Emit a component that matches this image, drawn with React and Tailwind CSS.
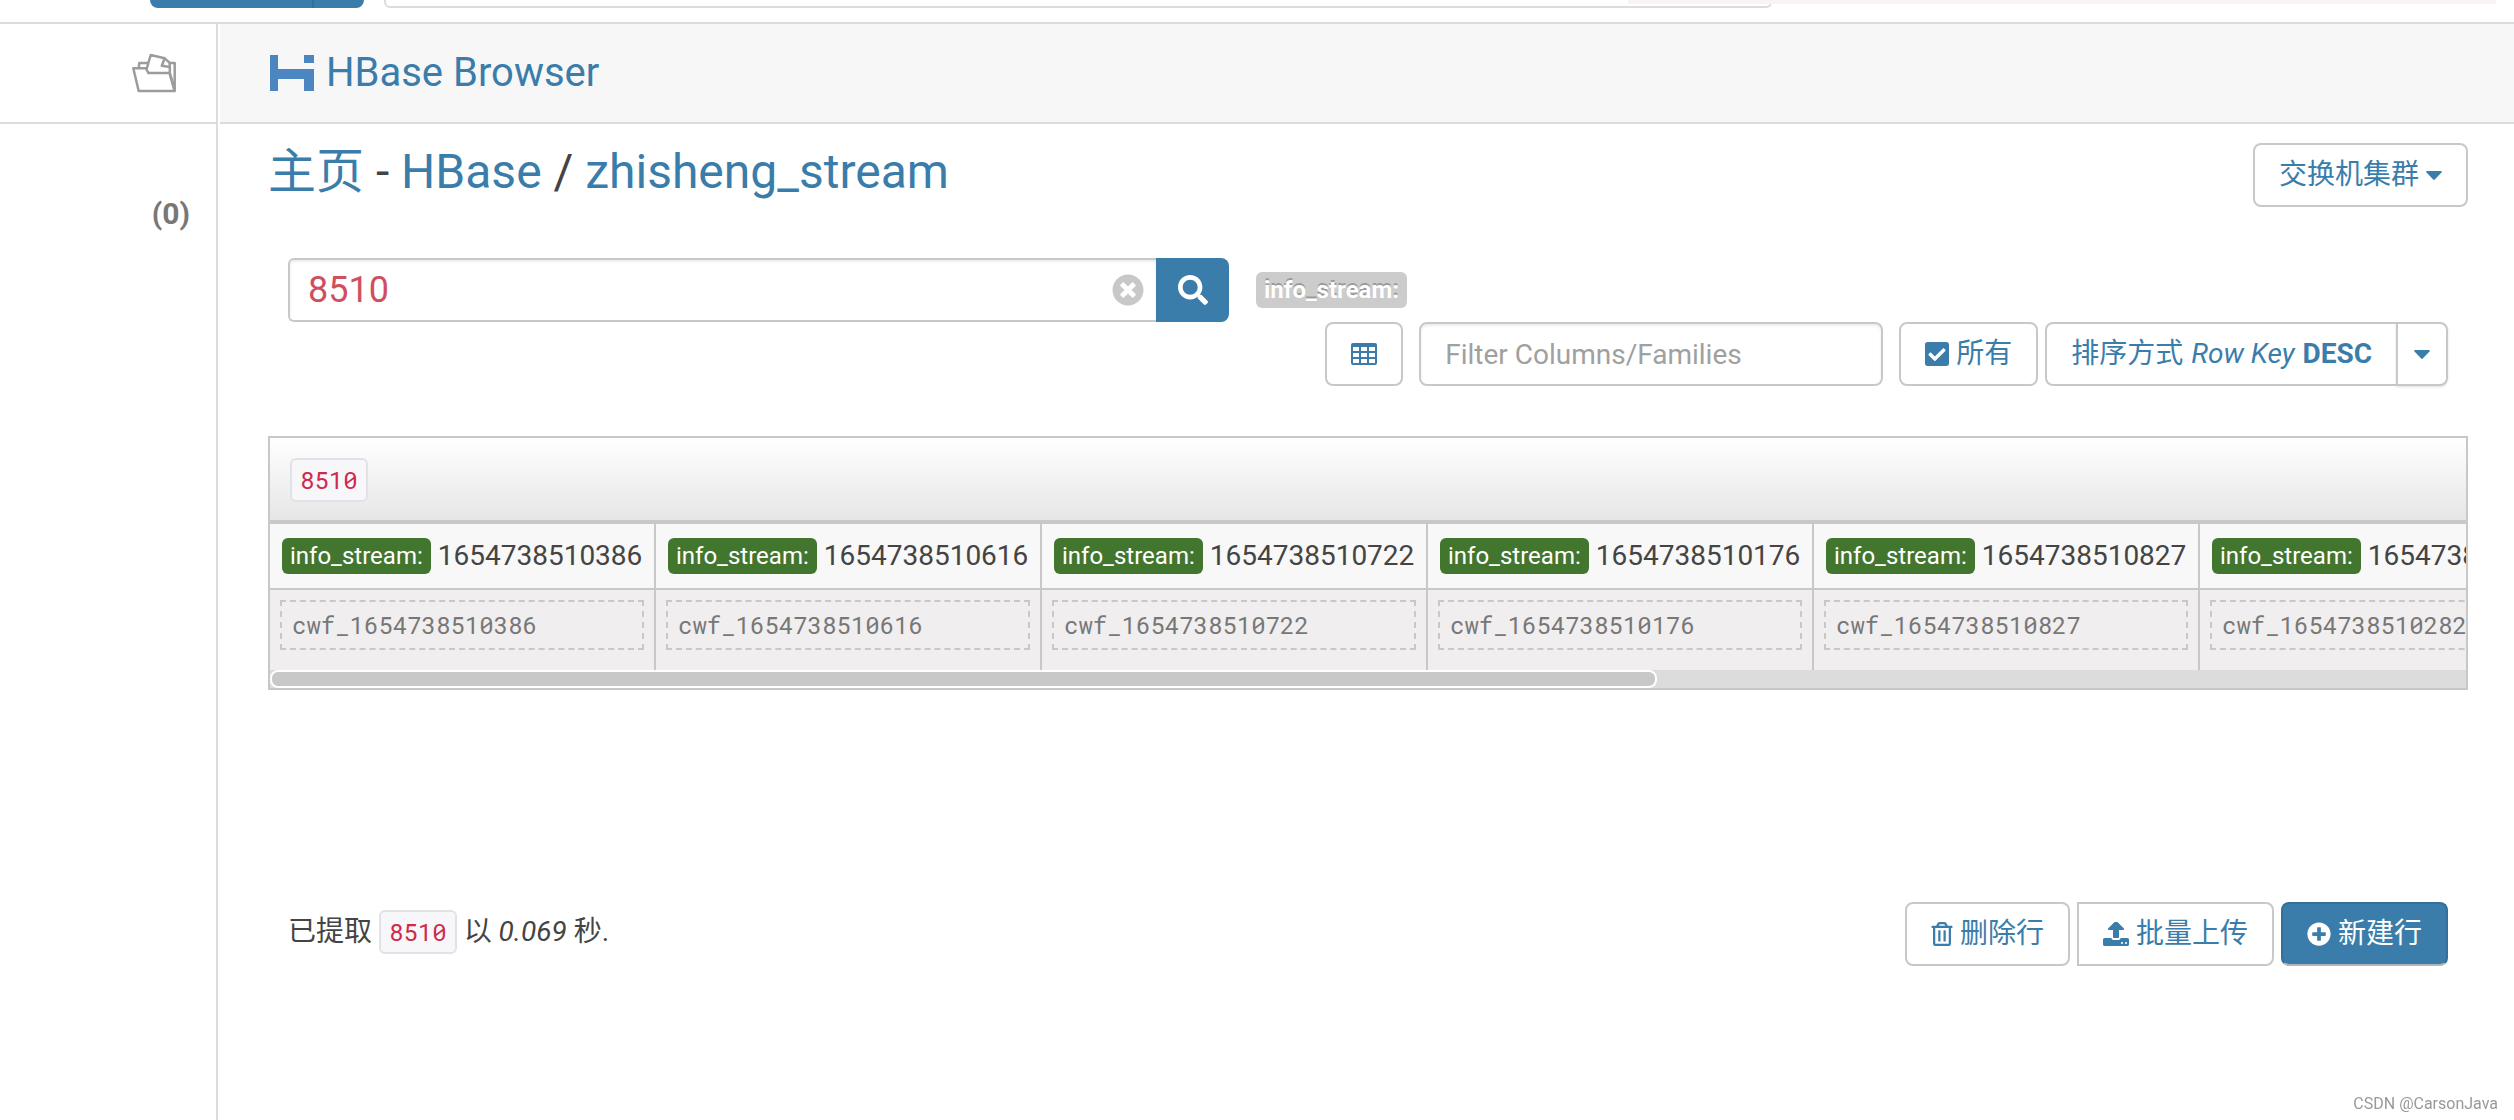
import React, { useState } from "react";
import {
  FaSearch,
  FaCheckSquare,
  FaRegTrashAlt,
  FaPlusCircle,
  FaTimesCircle,
} from "react-icons/fa";

const columns = [
  "1654738510386",
  "1654738510616",
  "1654738510722",
  "1654738510176",
  "1654738510827",
  "1654738510282",
];

const RowKey = ({ children }) => (
  <code className="inline-flex h-11 items-center rounded-md border-2 border-[#e1e1e8] bg-[#f7f7f9] px-2 font-['Roboto_Mono','Liberation_Mono',monospace] text-2xl text-[#d0284b]">
    {children}
  </code>
);

const Button = ({ className = "", children, ...props }) => (
  <button
    type="button"
    className={`flex h-16 items-center justify-center border-2 border-[#c8c8c8] bg-white px-6 text-[28px] whitespace-nowrap text-[#3a7dab] ${className}`}
    {...props}
  >
    {children}
  </button>
);

const FolderIcon = () => (
  <svg
    viewBox="0 0 44 40"
    className="h-10 w-11"
    fill="none"
    stroke="#9c9c9c"
    strokeWidth="2.5"
    strokeLinejoin="round"
    strokeLinecap="round"
  >
    <path d="M6.7 38 1.3 15.3H14M16.5 20h21l5 18H6.7M42.7 38V10H38" />
    <path d="M6.7 15 7.3 10h8M14.5 16.5 18.7 2l14 3.3 4.8 4.4.3 4M14.5 16.5l2 3.5M37.8 14v6l4 13" />
    <path d="m32.7 5.3-2.9 7.5 8 1.2" />
  </svg>
);

const HBaseLogo = () => (
  <svg viewBox="0 0 44 36" className="h-9 w-11" fill="#4c86c0">
    <path d="M0 0h8v14h36v22H34V24H8v12H0z" />
    <path d="M34 0h10v8H34z" />
  </svg>
);

const Caret = () => (
  <svg viewBox="0 0 16 9" className="h-[9px] w-4 shrink-0" fill="currentColor">
    <path d="M1 0h14q1.4.5.5 1.6L8.8 8.6q-.8.7-1.6 0L.5 1.6Q-.4.5 1 0z" />
  </svg>
);

const TableIcon = () => (
  <svg viewBox="0 0 26 22" className="h-[22px] w-[26px] shrink-0">
    <rect width="26" height="22" rx="2" fill="currentColor" />
    <g fill="#fff">
      <path d="M2 4h6v4H2zM10 4h6v4h-6zM18 4h6v4h-6z" />
      <path d="M2 10h6v4H2zM10 10h6v4h-6zM18 10h6v4h-6z" />
      <path d="M2 16h6v4H2zM10 16h6v4h-6zM18 16h6v4h-6z" />
    </g>
  </svg>
);

const UploadIcon = () => (
  <svg
    viewBox="64 128 1664 1536"
    className="h-6 w-[26px] shrink-0"
    fill="currentColor"
  >
    <path d="M1344 1472q0-26-19-45t-45-19-45 19-19 45 19 45 45 19 45-19 19-45zm256 0q0-26-19-45t-45-19-45 19-19 45 19 45 45 19 45-19 19-45zm128-224v320q0 40-28 68t-68 28h-1472q-40 0-68-28t-28-68v-320q0-40 28-68t68-28h427q21 56 70.5 92t110.5 36h256q61 0 110.5-36t70.5-92h427q40 0 68 28t28 68zm-325-648q-17 40-59 40h-256v448q0 26-19 45t-45 19h-256q-26 0-45-19t-19-45v-448h-256q-42 0-59-40-17-39 14-69l448-448q18-19 45-19t45 19l448 448q31 30 14 69z" />
  </svg>
);

const App = () => {
  const [query, setQuery] = useState("8510");
  const [filter, setFilter] = useState("");

  return (
    <div className="flex min-h-screen flex-col bg-white font-[Roboto,'Noto_Sans_CJK_SC',sans-serif] text-[28px] leading-10 text-[#444]">
      {/* Top bar */}
      <header className="relative flex h-6 shrink-0 items-start border-b-2 border-[#dcdcdc] pl-[150px]">
        <div className="flex h-2 w-[214px] rounded-b-lg bg-[#3a7dab]">
          <div className="w-[164px] border-r-2 border-[#336f98]" />
        </div>
        <div className="ml-5 h-2 w-[1388px] rounded-b-md border-2 border-t-0 border-[#dcdcdc]" />
        <div className="absolute top-0 right-[18px] h-1 w-[868px] bg-[#f9f3f3]" />
      </header>

      <div className="flex flex-1">
        {/* Sidebar */}
        <aside className="w-[218px] shrink-0 border-r-2 border-[#dcdcdc]">
          <div className="flex h-[100px] items-center justify-end border-b-2 border-[#dcdcdc] pr-10">
            <FolderIcon />
          </div>
          <p className="pt-[70px] pr-[26px] text-right text-3xl leading-10 font-bold text-[#777]">
            (0)
          </p>
        </aside>

        <main className="min-w-0 flex-1 pl-0.5">
          <div className="flex h-[100px] items-center border-b-2 border-[#dcdcdc] bg-[#f7f7f7] pl-[50px]">
            <a
              href="#"
              className="flex items-center gap-3 text-[40px] text-[#3a7dab]"
            >
              <HBaseLogo />
              HBase Browser
            </a>
          </div>

          <div className="pr-[46px] pl-12">
            {/* Breadcrumb */}
            <div className="flex justify-between pt-[19px]">
              <h1 className="text-5xl leading-[58px]">
                <a href="#" className="text-[#3a7dab]">
                  主页
                </a>{" "}
                -{" "}
                <a href="#" className="text-[#3a7dab]">
                  HBase
                </a>{" "}
                /{" "}
                <a href="#" className="text-[#3a7dab]">
                  zhisheng_stream
                </a>
              </h1>
              <Button className="gap-[7px] rounded-lg">
                交换机集群
                <Caret />
              </Button>
            </div>

            {/* Search */}
            <div className="flex items-center px-5 pt-[51px]">
              <div className="relative">
                <input
                  type="text"
                  aria-label="Search rows"
                  value={query}
                  onChange={(e) => setQuery(e.target.value)}
                  className="block h-16 w-[868px] rounded-l-md border-2 border-r-0 border-[#c8c8c8] px-[18px] text-4xl text-[#d04f5e] shadow-[inset_0_2px_3px_rgba(0,0,0,0.08)] outline-none"
                />
                <button
                  type="button"
                  aria-label="Clear"
                  onClick={() => setQuery("")}
                  className="absolute top-4 right-3 text-[#c8c8c8]"
                >
                  <FaTimesCircle className="size-8" />
                </button>
              </div>
              <button
                type="button"
                aria-label="Search"
                className="flex h-16 w-[73px] items-center justify-center rounded-r-lg bg-[#3a7dab] text-white"
              >
                <FaSearch className="size-[30px]" />
              </button>
              <span className="ml-[27px] rounded-md bg-[#ccc] px-2 text-2xl leading-9 font-bold text-white [text-shadow:0_-2px_0_rgba(0,0,0,0.25)]">
                info_stream:
              </span>
            </div>

            {/* Toolbar */}
            <div className="flex justify-end px-5">
              <Button aria-label="Columns" className="w-[78px] rounded-lg">
                <TableIcon />
              </Button>
              <input
                type="text"
                aria-label="Filter Columns/Families"
                placeholder="Filter Columns/Families"
                value={filter}
                onChange={(e) => setFilter(e.target.value)}
                className="mr-4 ml-4 h-16 w-[464px] rounded-lg border-2 border-[#c8c8c8] px-6 shadow-[inset_0_2px_3px_rgba(0,0,0,0.08)] outline-none placeholder:text-[#a0a0a0]"
              />
              <Button className="mr-[7px] gap-[7px] rounded-lg">
                <FaCheckSquare className="size-7 w-6" />
                所有
              </Button>
              <Button className="gap-2 rounded-l-lg">
                排序方式 <i>Row Key</i> <b>DESC</b>
              </Button>
              <Button
                aria-label="Sort order"
                className="-ml-0.5 w-[52px] rounded-r-lg shadow-sm"
              >
                <Caret />
              </Button>
            </div>

            {/* Results */}
            <div className="mt-[50px] overflow-hidden border-2 border-[#c8c8c8]">
              <div className="flex h-[86px] items-center border-b-4 border-[#c8c8c8] bg-linear-to-b from-white to-[#e6e6e6] px-5 pt-0.5">
                <RowKey>8510</RowKey>
              </div>
              <table className="w-max table-fixed border-separate border-spacing-0">
                <thead>
                  <tr>
                    {columns.map((col) => (
                      <th
                        key={col}
                        className="h-[66px] w-[386px] min-w-[386px] border-r-2 border-b-2 border-[#c8c8c8] bg-[#f8f8f8] pl-3 text-left font-normal"
                      >
                        <div className="flex items-center gap-[7px]">
                          <span className="rounded-md bg-[#42762e] px-2 text-2xl leading-9 text-white">
                            info_stream:
                          </span>
                          {col}
                        </div>
                      </th>
                    ))}
                  </tr>
                </thead>
                <tbody>
                  <tr>
                    {columns.map((col) => (
                      <td
                        key={col}
                        className="h-20 border-r-2 border-[#c8c8c8] bg-[#f0eeef] px-2.5 pt-2.5 align-top"
                      >
                        <div className="h-[50px] border-2 border-dashed border-[#c8c8c8] px-2.5 font-['Roboto_Mono','Liberation_Mono',monospace] text-2xl leading-[46px] text-[#777]">
                          cwf_{col}
                        </div>
                      </td>
                    ))}
                  </tr>
                </tbody>
              </table>
              <div className="h-[18px] bg-[#dcdcdc]">
                <div className="h-full w-12/19 rounded-lg border-2 border-white bg-[#c8c8c8]" />
              </div>
            </div>

            {/* Footer */}
            <div className="mt-[212px] flex items-start justify-between px-5">
              <p className="flex items-center gap-[7px] pt-2">
                已提取
                <RowKey>8510</RowKey>
                <span>
                  以 <i>0.069</i> 秒.
                </span>
              </p>
              <div className="flex gap-[7px]">
                <Button className="gap-[7px] rounded-lg">
                  <FaRegTrashAlt className="h-6 w-[22px]" />
                  删除行
                </Button>
                <Button className="gap-[7px] rounded-r-lg">
                  <UploadIcon />
                  批量上传
                </Button>
                <button
                  type="button"
                  className="flex h-16 items-center gap-[7px] rounded-lg border-2 border-[#336f98] border-b-[#b5b5b5] bg-[#3a7dab] px-6 text-white"
                >
                  <FaPlusCircle className="size-6" />
                  新建行
                </button>
              </div>
            </div>
          </div>
        </main>
      </div>

      <span className="fixed right-4 bottom-1 text-base leading-6 text-[#999]">
        CSDN @CarsonJava
      </span>
    </div>
  );
};

export default App;
